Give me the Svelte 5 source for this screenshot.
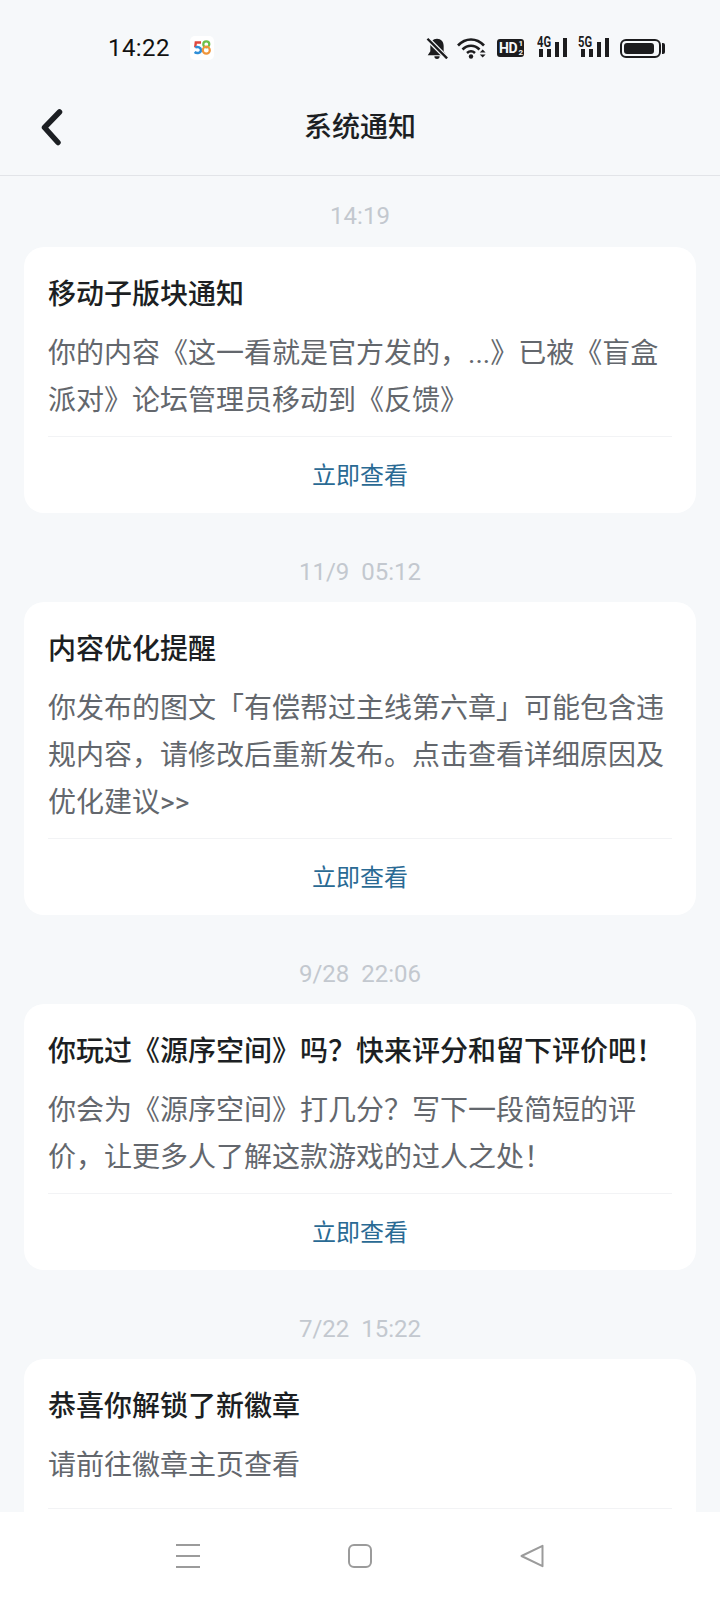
<script>
  const notices = [
    {
      time: '14:19',
      title: '移动子版块通知',
      body: '你的内容《这一看就是官方发的，...》已被《盲盒派对》论坛管理员移动到《反馈》',
      action: '立即查看'
    },
    {
      time: '11/9  05:12',
      title: '内容优化提醒',
      body: '你发布的图文「有偿帮过主线第六章」可能包含违规内容，请修改后重新发布。点击查看详细原因及优化建议>>',
      action: '立即查看'
    },
    {
      time: '9/28  22:06',
      title: '你玩过《源序空间》吗？快来评分和留下评价吧！',
      body: '你会为《源序空间》打几分？写下一段简短的评价，让更多人了解这款游戏的过人之处！',
      action: '立即查看'
    },
    {
      // action row of this one is scrolled below the nav bar
      time: '7/22  15:22',
      title: '恭喜你解锁了新徽章',
      body: '请前往徽章主页查看',
      action: ''
    }
  ]
</script>

<div class="page">
  <header class="top">
    <div class="status">
      <span class="clock">14:22</span>
      <svg class="logo" width="24" height="24" viewBox="0 0 24 24">
        <rect width="24" height="24" rx="5" fill="#fff" />
        <path d="M11 6.500H5.800L5.200 11.500" fill="none" stroke="#e0483e" stroke-width="2.400" />
        <path d="M5.300 11.400C8 10.300 11 11.400 11 14C11 17 7 18 4.600 16" fill="none" stroke="#2f8fd8" stroke-width="2.400" />
        <circle cx="16.300" cy="8.300" r="3" fill="none" stroke="#6cc04a" stroke-width="2.200" />
        <circle cx="16.300" cy="14.200" r="3.500" fill="none" stroke="#f0953a" stroke-width="2.200" />
      </svg>
      <div class="icons">
        <svg class="bell" width="22" height="22" viewBox="2 1 18 18.500">
          <path d="M11 2.500c3.400 0 5.600 2.600 5.600 6V13l2.200 3.400H3.200L5.400 13V8.500c0-3.400 2.200-6 5.600-6z" fill="#1c1c1e" />
          <path d="M8.800 17.200h4.400a2.200 2.200 0 0 1-4.400 0z" fill="#1c1c1e" />
          <path d="M3 2.500 19.500 19" stroke="#f6f8fa" stroke-width="4" />
          <path d="M3 2.500 19.500 19" stroke="#1c1c1e" stroke-width="2" />
        </svg>
        <svg width="29" height="22" viewBox="0 0 29 22">
          <path d="M1 8.500C8.500 .5 19.500 .5 27 8.500M5.500 12.500c5-5 12-5 17 0M10 16c2.500-2.200 5.500-2.200 8 0" fill="none" stroke="#1c1c1e" stroke-width="2.600" />
          <circle cx="14" cy="19.500" r="2.200" fill="#1c1c1e" />
          <path d="M22.800 15.500 25.700 12.500 28.600 15.500zM22.800 17.500 25.700 20.500 28.600 17.500z" fill="#1c1c1e" />
        </svg>
        <div class="hd">HD<span class="hd-sub"><i>1</i><i>2</i></span></div>
        <div class="net first">
          <span>4G</span>
          <div class="bars"><b></b><b></b><b></b><b></b></div>
        </div>
        <div class="net">
          <span>5G</span>
          <div class="bars"><b></b><b></b><b></b><b></b></div>
        </div>
        <div class="battery"><div class="cell"></div></div>
      </div>
    </div>
    <div class="title-bar">
      <svg class="back" width="28" height="40" viewBox="0 0 28 40">
        <path d="M18.500 4 3.500 19.500 17 34.500" fill="none" stroke="#1c1f23" stroke-width="5.500" stroke-linecap="round" stroke-linejoin="round" />
      </svg>
      <h1>系统通知</h1>
    </div>
  </header>

  <main class="list">
    {#each notices as n}
      <div class="time">{n.time}</div>
      <section class="card">
        <h2>{n.title}</h2>
        <p>{n.body}</p>
        <div class="action">{n.action}</div>
      </section>
    {/each}
  </main>

  <nav class="bottom">
    <svg width="24" height="24" viewBox="0 0 24 24">
      <path d="M0 1h24M0 12h24M0 23h24" stroke="#9b9b9b" stroke-width="2" />
    </svg>
    <svg width="24" height="24" viewBox="0 0 24 24">
      <rect x="1" y="1" width="22" height="22" rx="5" fill="none" stroke="#9b9b9b" stroke-width="2" />
    </svg>
    <svg width="24" height="24" viewBox="0 0 24 24">
      <path d="M22.500 1.800V22.200L1.500 12z" fill="none" stroke="#9b9b9b" stroke-width="2" stroke-linejoin="round" />
    </svg>
  </nav>
</div>

<style>
  :global(body) {
    margin: 0;
    background: #f6f8fa;
  }

  .page {
    width: 720px;
    height: 1600px;
    display: flex;
    flex-direction: column;
    overflow: hidden;
    font-family: Roboto, "Noto Sans CJK SC", sans-serif;
    background: #f6f8fa;
  }

  .top {
    flex: none;
    height: 176px;
    box-sizing: border-box;
    border-bottom: 1px solid #e2e4e8;
  }

  .status {
    height: 96px;
    display: flex;
    align-items: center;
    padding: 0 56px 0 108px;
    box-sizing: border-box;
  }

  .clock {
    font-size: 24px;
    color: #111;
    letter-spacing: 0.4px;
  }

  .logo {
    margin-left: 20px;
  }

  .icons {
    margin-left: auto;
    display: flex;
    align-items: center;
    gap: 11px;
  }

  .bell {
    margin-right: -2px;
  }

  .hd {
    width: 27px;
    height: 18px;
    background: #1c1c1e;
    border-radius: 3px;
    color: #f6f8fa;
    font-size: 14px;
    font-weight: 700;
    line-height: 18px;
    display: flex;
    padding-left: 2px;
    box-sizing: border-box;
    letter-spacing: -0.3px;
  }

  .hd-sub {
    display: flex;
    flex-direction: column;
    font-size: 8px;
    line-height: 9px;
    margin-left: 1px;
  }

  .hd-sub i {
    font-style: normal;
  }

  .net {
    position: relative;
    width: 31px;
    height: 22px;
  }

  .net.first {
    width: 30px;
    margin-left: 2px;
  }

  .net span {
    position: absolute;
    left: 0;
    top: -1px;
    font-size: 14px;
    font-weight: 700;
    line-height: 13px;
    color: #1c1c1e;
    transform: scaleX(0.8);
    transform-origin: left;
  }

  .bars {
    position: absolute;
    inset: 0 0 2px 0;
    display: flex;
    align-items: flex-end;
    justify-content: flex-end;
    gap: 4px;
  }

  .bars b {
    width: 4px;
    height: 8px;
    background: #1c1c1e;
  }

  .bars b:nth-child(3) {
    height: 15px;
  }

  .bars b:nth-child(4) {
    height: 19px;
  }

  .battery {
    position: relative;
    width: 41px;
    height: 19px;
    border: 2px solid #1c1c1e;
    border-radius: 6px;
    box-sizing: border-box;
    padding: 2px;
    margin-right: 3px;
  }

  .battery::after {
    content: "";
    position: absolute;
    right: -6px;
    top: 2px;
    width: 3px;
    height: 11px;
    background: #1c1c1e;
    border-radius: 0 2px 2px 0;
  }

  .cell {
    width: 30px;
    height: 100%;
    background: #1c1c1e;
    border-radius: 3px;
  }

  .title-bar {
    position: relative;
    height: 79px;
    box-sizing: border-box;
    padding-bottom: 21px;
    display: flex;
    align-items: center;
    justify-content: center;
  }

  .back {
    position: absolute;
    left: 41px;
    top: 12px;
  }

  h1 {
    margin: 0;
    font-size: 28px;
    font-weight: 500;
    color: #1c1f23;
  }

  .list {
    flex: 1;
    min-height: 0;
    overflow: hidden;
    padding: 0 24px;
  }

  .time {
    height: 71px;
    line-height: 80px;
    text-align: center;
    font-size: 24px;
    color: #c3c8cf;
    white-space: pre;
  }

  .card + .time {
    height: 89px;
    line-height: 118px;
  }

  .card {
    background: #fff;
    border-radius: 20px;
    padding: 26px 24px 0;
  }

  h2 {
    margin: 0 0 13px;
    font-size: 28px;
    line-height: 44px;
    font-weight: 500;
    color: #1c1f23;
    white-space: nowrap;
  }

  p {
    margin: 0 0 12px;
    min-height: 54px;
    font-size: 28px;
    line-height: 47px;
    color: #63676d;
  }

  .action {
    height: 77px;
    box-sizing: border-box;
    border-top: 1px solid #f2f3f5;
    line-height: 78px;
    text-align: center;
    font-size: 24px;
    color: #2a6a94;
  }

  .bottom {
    flex: none;
    height: 88px;
    background: #fff;
    display: flex;
    align-items: center;
    justify-content: center;
    gap: 148px;
    box-sizing: border-box;
  }
</style>
